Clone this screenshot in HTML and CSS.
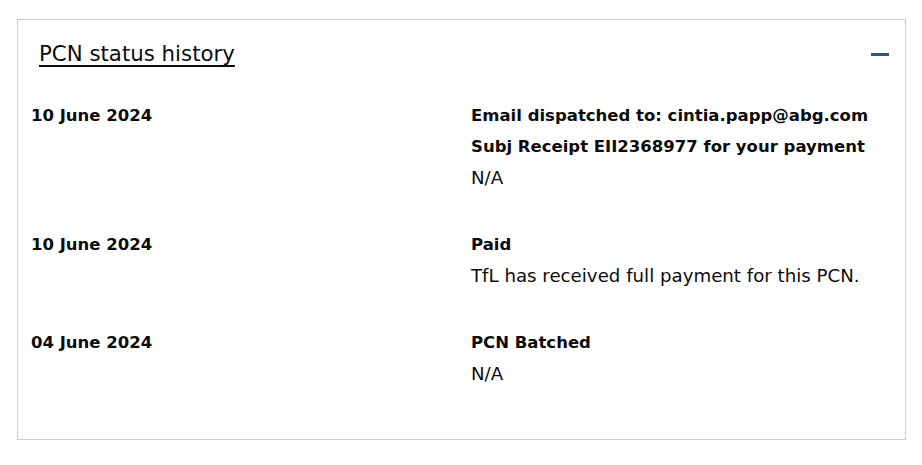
FILE: index.html
```html
<!DOCTYPE html>
<html lang="en">
<head>
<meta charset="utf-8">
<link rel="stylesheet" href="styles.css">
<title>PCN status history</title>
</head>
<body>
<section class="card">
  <div class="card-header">
    <a class="card-title" href="#">PCN status history</a>
    <span class="collapse-icon" aria-hidden="true"></span>
  </div>
  <div class="history">
    <div class="entry">
      <div class="entry-date">10 June 2024</div>
      <div class="entry-body">
        <div class="entry-status">Email dispatched to: cintia.papp@abg.com</div>
        <div class="entry-status">Subj Receipt EII2368977 for your payment</div>
        <div class="entry-note">N/A</div>
      </div>
    </div>
    <div class="entry">
      <div class="entry-date">10 June 2024</div>
      <div class="entry-body">
        <div class="entry-status">Paid</div>
        <div class="entry-note">TfL has received full payment for this PCN.</div>
      </div>
    </div>
    <div class="entry">
      <div class="entry-date">04 June 2024</div>
      <div class="entry-body">
        <div class="entry-status">PCN Batched</div>
        <div class="entry-note">N/A</div>
      </div>
    </div>
  </div>
</section>
</body>
</html>
```
FILE: styles.css
```css
html, body {
  margin: 0;
  padding: 0;
  background: #ffffff;
}
body {
  padding: 19px 16px 25px 17px;
  font-family: "DejaVu Sans", "Open Sans", sans-serif;
  color: #0b0c0c;
}
.card {
  border: 1px solid #cccccc;
  height: 419px;
  box-sizing: content-box;
}
.card-header {
  display: flex;
  align-items: center;
  justify-content: space-between;
  padding: 19px 16px 0 21px;
  height: 30px;
}
.card-title {
  font-size: 21.3px;
  line-height: 30px;
  color: #0b0c0c;
  text-decoration: underline;
  text-underline-offset: 4px;
  text-decoration-thickness: 2px;
}
.collapse-icon {
  width: 18px;
  height: 3px;
  background: #1d5b9b;
  margin-top: 1px;
}
.history {
  padding: 31px 13px 0 13px;
  display: flex;
  flex-direction: column;
  gap: 36px;
}
.entry {
  display: grid;
  grid-template-columns: 440px 1fr;
  line-height: 31px;
}
.entry-date, .entry-status {
  font-size: 16.5px;
  font-weight: 700;
}
.entry-note {
  font-size: 18.2px;
  font-weight: 400;
}
```
